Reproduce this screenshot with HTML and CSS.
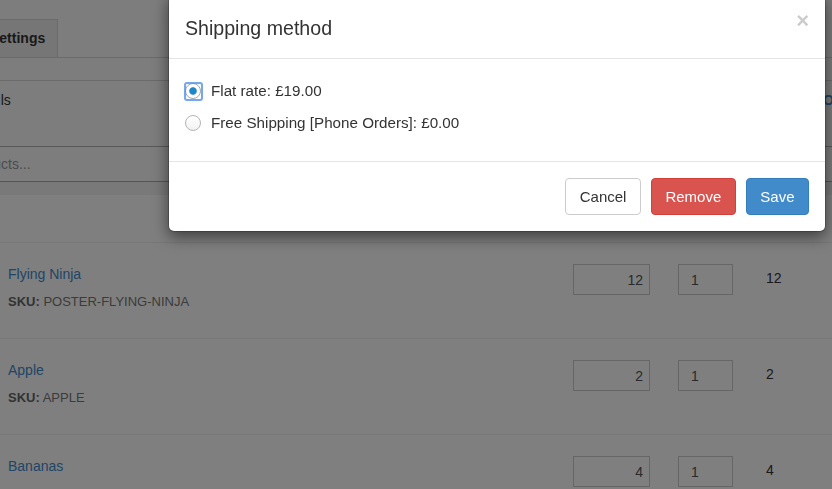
FILE: index.html
```html
<!DOCTYPE html>
<html lang="en">
<head>
<meta charset="utf-8">
<title>Shipping method</title>
<link rel="stylesheet" href="styles.css">
</head>
<body>
<div class="page">
  <nav class="tabs">
    <div class="tab">Settings</div>
  </nav>
  <div class="subbar"></div>
  <div class="details-row">
    <div class="details-title">Details</div>
    <a class="details-link">Options</a>
  </div>
  <div class="search">
    <input class="search-input" type="text" placeholder="Search products...">
  </div>
  <div class="band"></div>
  <div class="items">
    <div class="thead"></div>
    <div class="item">
      <div class="item-info">
        <a class="item-name">Flying Ninja</a>
        <div class="item-sku"><b>SKU:</b> POSTER-FLYING-NINJA</div>
      </div>
      <div class="cell"><input class="price" type="text" value="12"></div>
      <div class="cell"><input class="qty" type="text" value="1"></div>
      <div class="cell total">12</div>
    </div>
    <div class="item">
      <div class="item-info">
        <a class="item-name">Apple</a>
        <div class="item-sku"><b>SKU:</b> APPLE</div>
      </div>
      <div class="cell"><input class="price" type="text" value="2"></div>
      <div class="cell"><input class="qty" type="text" value="1"></div>
      <div class="cell total">2</div>
    </div>
    <div class="item">
      <div class="item-info">
        <a class="item-name">Bananas</a>
        <div class="item-sku"><b>SKU:</b> BANANAS</div>
      </div>
      <div class="cell"><input class="price" type="text" value="4"></div>
      <div class="cell"><input class="qty" type="text" value="1"></div>
      <div class="cell total">4</div>
    </div>
  </div>
</div>

<div class="backdrop"></div>

<div class="modal" role="dialog">
  <div class="modal-header">
    <h4 class="modal-title">Shipping method</h4>
    <button class="close" type="button">&times;</button>
  </div>
  <div class="modal-body">
    <label class="opt">
      <span class="ring focused"><input type="radio" name="ship" checked></span>
      Flat rate: £19.00
    </label>
    <label class="opt">
      <span class="ring"><input type="radio" name="ship"></span>
      Free Shipping [Phone Orders]: £0.00
    </label>
  </div>
  <div class="modal-footer">
    <button class="btn btn-default" type="button">Cancel</button>
    <button class="btn btn-danger" type="button">Remove</button>
    <button class="btn btn-primary" type="button">Save</button>
  </div>
</div>
</body>
</html>
```

FILE: styles.css
```css
* { box-sizing: border-box; }

html, body {
  margin: 0;
  padding: 0;
}

body {
  width: 832px;
  height: 489px;
  overflow: hidden;
  position: relative;
  background: #fff;
  color: #333;
  font-family: "Liberation Sans", Arial, sans-serif;
  font-size: 14px;
  line-height: 20px;
}

/* ---------- underlying page ---------- */
.page {
  width: 832px;
  background: #fbfbfb;
}

.tabs {
  display: flex;
  padding-top: 19px;
  border-bottom: 1px solid #d6d6d6;
}

.tab {
  height: 38px;
  margin-left: -24px;
  padding: 0 12px 0 13px;
  background: #ececec;
  border: 1px solid #d6d6d6;
  border-bottom: none;
  font-weight: bold;
  line-height: 36px;
}

.subbar {
  height: 23px;
  border-bottom: 1px solid #d6d6d6;
}

.details-row {
  height: 65px;
  display: grid;
  grid-template-columns: 823px max-content;
  padding-top: 9px;
}

.details-title {
  margin-left: -32px;
  color: #333;
}

.details-link {
  color: #428bca;
  font-weight: bold;
  white-space: nowrap;
}

.search {
  border-top: 1px solid #b2b2b2;
  border-bottom: 1px solid #aaa;
}

.search-input {
  display: block;
  width: 832px;
  height: 34px;
  margin: 0;
  padding: 0;
  text-indent: -83px;
  border: none;
  background: transparent;
  font: inherit;
  color: #333;
  outline: none;
}

.search-input::placeholder {
  color: #999;
}

.band {
  height: 13px;
  background: #f3f3f3;
}

.items {
  background: #fff;
}

.thead {
  height: 47px;
  background: #fff;
}

.item {
  display: grid;
  grid-template-columns: 565px 105px 88px 1fr;
  height: 96px;
  padding: 21px 0 0 8px;
  border-top: 1px solid #eee;
}

.item-name {
  display: block;
  color: #428bca;
  font-size: 14px;
  line-height: 20px;
}

.item-sku {
  margin-top: 8px;
  font-size: 13px;
  color: #777;
}

.item-sku b {
  color: #666;
}

.cell input {
  display: block;
  margin-top: 0;
  height: 31px;
  border: 1px solid #ccc;
  background: #fff;
  font: inherit;
  color: #555;
  outline: none;
}

.price {
  width: 77px;
  padding: 0 6px;
  text-align: right;
}

.qty {
  width: 55px;
  padding: 0 0 0 12px;
}

.total {
  margin-top: 4px;
  color: #333;
}

/* ---------- backdrop ---------- */
.backdrop {
  position: fixed;
  inset: 0;
  background: rgba(0, 0, 0, 0.5);
}

/* ---------- modal ---------- */
.modal {
  position: absolute;
  top: -6px;
  left: 168px;
  width: 658px;
  background: #fff;
  border: 1px solid rgba(0, 0, 0, 0.2);
  border-radius: 6px;
  box-shadow: 0 5px 15px rgba(0, 0, 0, 0.5);
  background-clip: padding-box;
}

.modal-header {
  display: flex;
  justify-content: space-between;
  align-items: flex-start;
  padding: 20px 16px 17px 16px;
  border-bottom: 1px solid #e5e5e5;
}

.modal-title {
  margin: 0;
  font-size: 19.6px;
  font-weight: normal;
  line-height: 26px;
  color: #333;
}

.close {
  margin-top: -5px;
  padding: 0;
  border: 0;
  background: transparent;
  font-family: "Liberation Sans", Arial, sans-serif;
  font-size: 22px;
  font-weight: bold;
  line-height: 22px;
  color: #000;
  opacity: 0.2;
}

.modal-body {
  display: flex;
  flex-direction: column;
  gap: 12px;
  padding: 22px 16px 28px 16px;
}

.opt {
  display: flex;
  align-items: center;
  height: 20px;
  font-size: 15.2px;
  color: #333;
}

.ring {
  position: relative;
  display: inline-flex;
  width: 16px;
  height: 16px;
  margin-right: 10px;
}

.ring input {
  appearance: none;
  -webkit-appearance: none;
  width: 16px;
  height: 16px;
  margin: 0;
  border: 1px solid #b5b5b5;
  border-radius: 50%;
  background: linear-gradient(#fff, #f2f2f2);
}

.ring input:checked {
  border-color: #9aa9bb;
  background: radial-gradient(circle, #1c88c9 0 3.3px, #fff 4.2px);
}

.ring.focused::after {
  content: "";
  position: absolute;
  inset: -1px -2px -2px -1px;
  border: 2px solid rgba(92, 152, 232, 0.85);
  border-radius: 3px;
}

.modal-footer {
  display: flex;
  justify-content: flex-end;
  gap: 10px;
  padding: 16px;
  border-top: 1px solid #e5e5e5;
}

.btn {
  height: 37px;
  padding: 7px 13.5px;
  border: 1px solid transparent;
  border-radius: 4px;
  font-family: "Liberation Sans", Arial, sans-serif;
  font-size: 15px;
  line-height: 21px;
}

.btn-default {
  background: #fff;
  border-color: #ccc;
  color: #333;
}

.btn-danger {
  background: #d9534f;
  border-color: #d43f3a;
  color: #fff;
}

.btn-primary {
  background: #428bca;
  border-color: #357ebd;
  color: #fff;
}
```
